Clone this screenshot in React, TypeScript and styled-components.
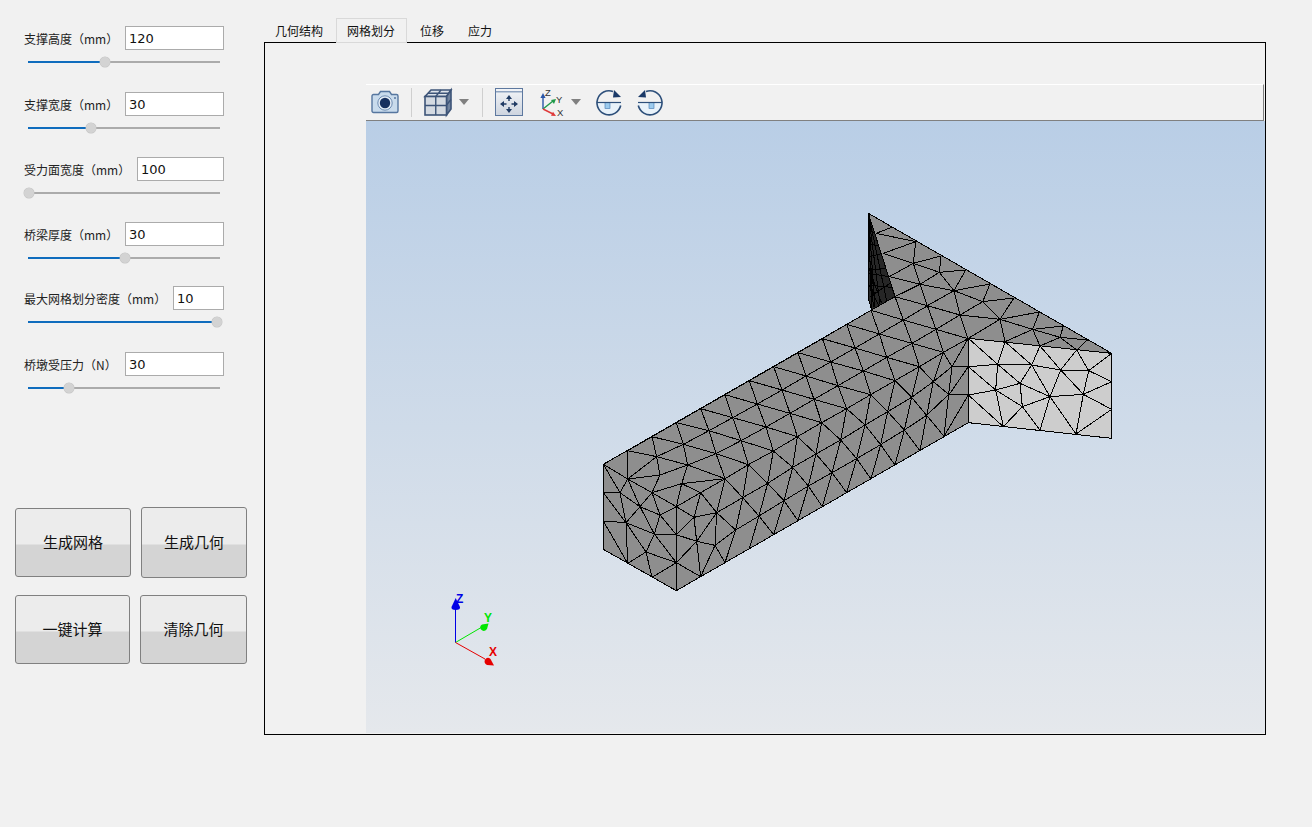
import React from "react";
import styled, { createGlobalStyle } from "styled-components";

const Global = createGlobalStyle`
  html, body { margin: 0; padding: 0; background: #f1f1f1; overflow: hidden; }
  body { width: 1312px; height: 827px; font-family: "Noto Sans CJK SC", "Liberation Sans", sans-serif; }
`;

const Page = styled.div`
  display: flex;
  width: 1312px;
  height: 827px;
  background: #f1f1f1;
`;

const SidePanel = styled.div`
  width: 263px;
  flex: none;
  padding-top: 26px;
  box-sizing: border-box;
`;

const ParamBlock = styled.div<{ $gap: number }>`
  width: 200px;
  margin: 0 0 ${(p) => p.$gap}px 24px;
`;

const ParamHead = styled.div`
  display: flex;
  align-items: center;
  height: 24px;
`;

const ParamLabel = styled.label`
  flex: 1;
  padding-top: 1px;
  font-size: 12px;
  line-height: 26px;
  color: #222;
  white-space: nowrap;
`;

const ParamInput = styled.input<{ $w: number }>`
  width: ${(p) => p.$w}px;
  height: 24px;
  box-sizing: border-box;
  border: 1px solid #ababab;
  background: #fff;
  padding: 0 3px;
  margin: 0;
  outline: none;
  font-family: "DejaVu Sans", sans-serif;
  font-size: 13px;
  color: #111;
`;

const SliderRow = styled.div`
  display: flex;
  align-items: center;
  width: 192px;
  height: 10px;
  margin: 7px 0 0 4px;
`;

const SliderFill = styled.div`
  height: 2px;
  background: #0f6cbd;
  flex: none;
`;

const SliderRest = styled.div`
  height: 2px;
  flex: 1;
  background: #ababab;
`;

const SliderThumb = styled.div`
  width: 10px;
  height: 10px;
  margin: 0 -5px;
  border-radius: 50%;
  background: #d3d3d3;
  box-shadow: 0 0 0 0.5px #c4c4c4;
  flex: none;
  position: relative;
  z-index: 1;
`;

const ButtonRow = styled.div<{ $h: number; $top: number }>`
  display: flex;
  align-items: center;
  height: ${(p) => p.$h}px;
  margin-top: ${(p) => p.$top}px;
  padding-left: 15px;
`;

const ActionButton = styled.button<{ $w: number; $h: number; $ml?: number }>`
  width: ${(p) => p.$w}px;
  height: ${(p) => p.$h}px;
  margin: 0 0 0 ${(p) => p.$ml ?? 0}px;
  padding: 0 0 2px;
  box-sizing: border-box;
  border: 1px solid #808080;
  border-radius: 3px;
  background: linear-gradient(#ececec 0, #ececec 51.6%, #e0e0e0 51.6%, #e0e0e0 53%, #d4d4d4 53%, #d4d4d4 100%);
  font-family: "Noto Sans CJK SC", sans-serif;
  font-size: 15px;
  color: #111;
`;

const Workspace = styled.div`
  flex: none;
  width: 1003px;
  padding-top: 18px;
`;

const TabBar = styled.div`
  display: flex;
  height: 25px;
  margin-bottom: -1px;
  position: relative;
  z-index: 1;
`;

const Tab = styled.div<{ $active?: boolean }>`
  box-sizing: border-box;
  height: 25px;
  font-size: 12px;
  line-height: 26px;
  color: #111;
  white-space: nowrap;
  ${(p) =>
    p.$active
      ? `margin: 0 1px 0 1px; padding: 0 11px 0 10px; border: 1px solid #d9d9d9; line-height: 24px; background: #f1f1f1;`
      : `padding: 0 12px;`}
`;

const Frame = styled.div`
  width: 1002px;
  height: 693px;
  margin-left: 1px;
  box-sizing: border-box;
  border: 1px solid #000;
  padding: 41px 0 0 101px;
`;

const Toolbar = styled.div`
  display: flex;
  align-items: center;
  box-sizing: border-box;
  width: 898px;
  height: 37px;
  padding-left: 5px;
  border-top: 1px solid #fff;
  border-bottom: 1px solid #808080;
  border-right: 1px solid #808080;
  background: #f1f1f1;
`;

const ToolIcon = styled.svg<{ $ml?: number; $up?: number }>`
  display: block;
  flex: none;
  overflow: visible;
  margin-left: ${(p) => p.$ml ?? 0}px;
  margin-bottom: ${(p) => p.$up ?? 0}px;
`;

const ToolSeparator = styled.div<{ $ml: number }>`
  width: 1px;
  height: 29px;
  flex: none;
  margin-left: ${(p) => p.$ml}px;
  background: #cfcfcf;
`;

const Viewport = styled.div`
  width: 899px;
  height: 612px;
  background: linear-gradient(#b9cee6, #e5e8ec);
`;

const MeshCanvas = styled.svg`
  display: block;
  width: 899px;
  height: 612px;
`;

type Line = number[];
const A: Line[] = [
  [113,452,186,410,259,368,332,326,405,284,478,242,551,200,624,158,697,116,770,73,843,31],
  [113,537,200,470,280,433,357,392,428,353,502,312,576,270,648,228,722,186,795,144,868,102,940,60,1013,17],
  [113,537,210,525,293,495,378,461,453,422,528,381,600,340,672,298,744,257,820,213,890,172,966,130,1038,88,1110,45],
  [186,578,275,551,405,536,475,494,550,453,622,410,695,368,770,326,842,284,915,242,988,200,1060,157,1134,116],
  [332,578,405,536],
  [380,638,458,593,533,550,608,502,678,462,752,420,825,375,893,335,965,292,1030,245,1086,200],
  [375,736,437,690,507,648,582,602,655,558,726,518,800,476,872,434,943,390,1010,346,1076,283],
  [332,326,357,392,378,461,405,536],
  [405,284,428,353,453,422,475,494,458,593,437,690,405,788],
  [478,242,502,312,528,381,550,453,533,550,507,648,478,746],
  [551,200,576,270,600,340,622,410,608,502,582,602,551,704],
  [624,158,648,228,672,298,695,368,678,462,655,558,624,662],
  [697,116,722,186,744,257,770,326,752,420,726,518,697,620],
  [770,73,795,144,820,213,842,284,825,375,800,476,770,578],
  [843,31,868,102,890,172,915,242,893,335,872,434,843,537],
  [915,-10,940,60,966,130,988,200,965,292,943,390,915,495],
  [1012,17,1038,88,1060,157,1030,245,1010,346,990,452],
  [1092,-28,1110,45,1134,116,1086,200,1076,283,1062,409],
  [113,452,200,470,293,495,405,536],
  [186,410,280,433,378,461,475,494],
  [259,368,357,392,453,422,550,453],
  [332,326,428,353,528,381,622,410],
  [405,284,502,312,600,340,695,368],
  [478,242,576,270,672,298,770,326],
  [551,200,648,228,744,257,842,284],
  [624,158,722,186,820,213,915,242],
  [697,116,795,144,890,172,988,200],
  [770,73,868,102,966,130,1060,157],
  [843,31,940,60,1038,88,1134,116],
  [405,536,458,593,507,648,551,704],
  [475,494,533,550,582,602,624,662],
  [550,453,608,502,655,558,697,620],
  [622,410,678,462,726,518,770,578],
  [695,368,752,420,800,476,843,537],
  [770,326,825,375,872,434,915,495],
  [842,284,893,335,943,390,990,452],
  [915,242,965,292,1010,346,1062,409],
  [988,200,1030,245,1076,283],
  [1060,157,1086,200],
  [1086,200,1135,200,1078,283,1135,285,1062,409],
  [40,493,113,537],
  [113,452,113,537],
  [186,410,200,470,210,525,186,578],
  [259,368,280,433,293,495,275,551,259,620],
  [113,537,186,578],
  [113,537,150,620],
  [40,493,90,578,108,668],
  [40,578,90,578,113,537],
  [40,578,108,668],
  [40,663,108,668,113,790],
  [40,663,113,790],
  [108,668,150,620,90,578],
  [150,620,186,578,210,645,150,620],
  [210,645,259,620,186,578],
  [275,551,332,578,259,620,312,652,332,578],
  [312,652,380,638,332,578],
  [380,638,405,536],
  [312,652,320,724,380,638,375,736,320,724,259,704,312,652],
  [108,668,193,702,150,620],
  [210,645,193,702,259,704,210,645],
  [193,702,168,756,108,668],
  [193,702,259,788,168,756,113,790],
  [168,756,186,832,259,788,320,724,332,830,259,788],
  [375,736,405,788],
  [375,736,332,830],
  [437,690,380,638],
  [259,620,259,872],
];

const C: Line[] = [
  [78,100,125,82],
  [78,100,197,125,100,160,190,190,197,125],
  [190,190,273,168,268,217,190,190,118,230,210,253,190,190],
  [268,217,347,210,312,272,268,217,210,253,312,272,420,252,398,305,492,294,450,358,568,336,548,388,640,378,630,412,712,420,680,450,630,412,548,388,450,358,398,305,312,272],
  [135,290,210,253,232,317,135,290],
  [232,317,312,272],
  [398,305,330,345],
  [232,317,330,345,450,358,355,415],
  [548,388,570,438,630,412],
  [548,388,465,425,450,358],
  [355,415,785,460],
];

const L: Line[] = [
  [355,415,443,493,465,425,545,495,570,438,632,510,680,450,716,512,785,460],
  [355,500,443,493,545,495,632,510,716,512,785,545],
  [716,512,700,583,632,510,600,590,545,495,510,550,600,590,570,690,517,620,600,590,678,702,700,583,600,590],
  [443,493,510,550,437,570,443,493],
  [355,500,437,570,355,585,460,680,437,570,517,620,460,680],
  [510,550,517,620],
  [700,583,785,545],
  [700,583,785,628,678,702],
];

const Fin: Line[] = [
  [55,40,65,330],[55,40,75,322],[55,40,90,312],[55,40,110,302],
  [55,90,78,100],[55,130,90,140],[55,170,100,160],[55,220,118,230],[55,255,125,262],
  [55,120,70,320],[55,200,95,310],[60,290,120,250],[58,210,112,205],[56,150,75,300],[55,250,85,315],
];

const zA = (x: number, y: number) => `${590 + x / 3},${300 + y / 3}`;
const zC = (x: number, y: number) => `${850 + x / 3},${200 + y / 3}`;
const pts = (l: Line, f: (x: number, y: number) => string) => {
  const out: string[] = [];
  for (let i = 0; i < l.length; i += 2) out.push(f(l[i], l[i + 1]));
  return out.join(" ");
};

function Mesh() {
  const bodyOutline = [
    zA(40, 493), zA(843, 31), zC(135, 290), zC(55, 40), zC(785, 460), zC(355, 415), zC(355, 668),
    zA(259, 872), zA(40, 748),
  ].join(" ");
  return (
    <MeshCanvas viewBox="366 121 899 612">
      <polygon points={pts([55,40,55,295,65,330,135,290], zC)} fill="#262626" stroke="#000" strokeWidth={1} shapeRendering="crispEdges" />
      <g stroke="#000" strokeWidth={1} fill="none" shapeRendering="crispEdges">
        {Fin.map((l, i) => <polyline key={i} points={pts(l, zC)} />)}
      </g>
      <polygon points={bodyOutline} fill="#8e8e8e" stroke="#000" strokeWidth={1} shapeRendering="crispEdges" />
      <polygon points={pts([355,415,785,460,785,715,355,668], zC)} fill="#cdcdcd" stroke="#000" strokeWidth={1} shapeRendering="crispEdges" />
      <g stroke="#000" strokeWidth={1} fill="none" shapeRendering="crispEdges" strokeLinejoin="round">
        {A.map((l, i) => <polyline key={i} points={pts(l, zA)} />)}
        {C.map((l, i) => <polyline key={i} points={pts(l, zC)} />)}
        {L.map((l, i) => <polyline key={i} points={pts(l, zC)} />)}
      </g>
      <line x1="455.5" y1="642.5" x2="455.5" y2="606" stroke="#0000e6" strokeWidth={1} />
      <path d="M455.700 598 L460 607 Q460.500 610 455.700 610 Q451 610 451.500 607 Z" fill="#0000e6" />
      <text x="456" y="603" fontFamily="Liberation Sans, sans-serif" fontWeight="700" fontSize="12" fill="#0000e6">Z</text>
      <line x1="455.5" y1="642.5" x2="482" y2="627" stroke="#00e600" strokeWidth={1} />
      <path d="M488.500 623.500 L487 629 Q484 632.500 481 629.500 Q479 626.500 482 624.500 Z" fill="#00e600" />
      <text x="484" y="622" fontFamily="Liberation Sans, sans-serif" fontWeight="700" fontSize="12" fill="#00e600">Y</text>
      <line x1="455.5" y1="642.5" x2="485" y2="659" stroke="#e60000" strokeWidth={1} />
      <path d="M494 665.500 L487 665 Q483.500 663 485 659.500 Q487.500 656.500 490.500 659 Z" fill="#e60000" />
      <text x="489" y="656" fontFamily="Liberation Sans, sans-serif" fontWeight="700" fontSize="12" fill="#e60000">X</text>
    </MeshCanvas>
  );
}

const CameraIcon = () => (
  <ToolIcon width={28} height={24} viewBox="0 0 28 24" $up={1}>
    <path d="M2.500 4.500h5l2-3h9l2 3h5a1.500 1.500 0 0 1 1.500 1.500v15a1.500 1.500 0 0 1-1.500 1.500h-23A1.500 1.500 0 0 1 1 21V6a1.500 1.500 0 0 1 1.500-1.500z" fill="#c9dbec" stroke="#56769f" strokeWidth={1.4} />
    <circle cx={14} cy={13} r={7.2} fill="#e3ecf5" stroke="#6f8db3" strokeWidth={1} />
    <circle cx={14} cy={13} r={5.2} fill="#17305f" />
    <circle cx={24} cy={8} r={1} fill="#56769f" />
  </ToolIcon>
);

const CubeIcon = () => (
  <ToolIcon $ml={12} width={28} height={27} viewBox="0 0 28 27" $up={1}>
    <path d="M1 7.500 7 1h20l-4.500 6.500z" fill="#dde3ea" stroke="#3d5478" strokeWidth={1.6} />
    <path d="M22.500 7.500 27 1v19l-4.500 6z" fill="#71849f" stroke="#3d5478" strokeWidth={1.6} />
    <rect x={1} y={7.5} width={21.5} height={18.5} fill="#d4dae2" stroke="#3d5478" strokeWidth={1.6} />
    <path d="M11.750 7.500V26M1 16.500h21.500M11.750 7.500 17 1M22.500 16 27 10.500M4 4.300h20" stroke="#3d5478" strokeWidth={1.4} fill="none" />
  </ToolIcon>
);

const DropArrow = ({ ml }: { ml: number }) => (
  <ToolIcon $ml={ml} width={10} height={6} viewBox="0 0 10 6" $up={1}>
    <polygon points="0,0 10,0 5,6" fill="#808080" />
  </ToolIcon>
);

const PanIcon = () => (
  <ToolIcon $ml={12} width={28} height={28} viewBox="0 0 28 28" $up={1}>
    <defs>
      <linearGradient id="panBg" x1="0" y1="0" x2="0" y2="1">
        <stop offset="0" stopColor="#f3f5f8" />
        <stop offset="1" stopColor="#cdd4df" />
      </linearGradient>
    </defs>
    <rect x={0.5} y={0.5} width={27} height={27} fill="url(#panBg)" stroke="#5d789f" />
    <rect x={1} y={3} width={26} height={1.5} fill="#8ea3c0" />
    <path d="M14 9v4M14 19v4M7.500 16h4M16.500 16h4" stroke="#1f3a63" strokeWidth={1.4} fill="none" />
    <path d="M14 7l3 4h-6zM14 25l3-4h-6zM5 16l4-3v6zM23 16l-4-3v6z" fill="#1f3a63" />
  </ToolIcon>
);

const AxesIcon = () => (
  <ToolIcon $ml={15} width={26} height={29} viewBox="0 0 26 29" $up={1}>
    <path d="M5 21V8" stroke="#2a56a8" strokeWidth={1.4} />
    <path d="M5 5l2.600 5H2.400z" fill="#2a56a8" />
    <path d="M5 21l10-8" stroke="#1f9a4a" strokeWidth={1.4} />
    <path d="M18 11l-2 5-3-4z" fill="#1f9a4a" />
    <path d="M5 21l10 5" stroke="#e03a3a" strokeWidth={1.4} />
    <path d="M18 28l-5-.200 2-4z" fill="#e03a3a" />
    <text x={7} y={8} fontFamily="Liberation Sans, sans-serif" fontSize="9.500" fill="#333">Z</text>
    <text x={18} y={15} fontFamily="Liberation Sans, sans-serif" fontSize="9.500" fill="#333">Y</text>
    <text x={19} y={28} fontFamily="Liberation Sans, sans-serif" fontSize="9.500" fill="#333">X</text>
  </ToolIcon>
);

const RotateArt = () => (
  <>
    <path d="M1 13.500a12 12 0 0 0 24 0z" fill="#e8f2fa" />
    <rect x={9} y={13.5} width={5} height={6} fill="#9ccbee" stroke="#3f76ad" strokeWidth={0.6} />
    <path d="M1 13.500h24" stroke="#2d4f7a" strokeWidth={1.2} fill="none" />
    <path d="M24.700 16.500a12 12 0 1 1-7.700-14" stroke="#2d4f7a" strokeWidth={1.6} fill="none" />
    <path d="M18 1 25 8 17 8.500z" fill="#1b3a68" />
  </>
);

const RotateRightIcon = () => (
  <ToolIcon $ml={15} width={26} height={26} viewBox="0 0 26 26" $up={1}><RotateArt /></ToolIcon>
);

const RotateLeftIcon = () => (
  <ToolIcon $ml={15} width={26} height={26} viewBox="0 0 26 26" $up={1}>
    <g transform="translate(26 0) scale(-1 1)"><RotateArt /></g>
  </ToolIcon>
);

const params = [
  { label: "支撑高度（mm）", value: "120", w: 99, fill: 77, gap: 25 },
  { label: "支撑宽度（mm）", value: "30", w: 99, fill: 63, gap: 24 },
  { label: "受力面宽度（mm）", value: "100", w: 87, fill: 1, gap: 24 },
  { label: "桥梁厚度（mm）", value: "30", w: 99, fill: 97, gap: 23 },
  { label: "最大网格划分密度（mm）", value: "10", w: 51, fill: 189, gap: 25 },
  { label: "桥墩受压力（N）", value: "30", w: 99, fill: 41, gap: 0 },
];

export default function App() {
  return (
    <Page>
      <Global />
      <SidePanel>
        {params.map((p) => (
          <ParamBlock key={p.label} $gap={p.gap}>
            <ParamHead>
              <ParamLabel>{p.label}</ParamLabel>
              <ParamInput $w={p.w} defaultValue={p.value} />
            </ParamHead>
            <SliderRow>
              <SliderFill style={{ width: p.fill }} />
              <SliderThumb />
              <SliderRest />
            </SliderRow>
          </ParamBlock>
        ))}
        <ButtonRow $h={71} $top={114}>
          <ActionButton $w={116} $h={69}>生成网格</ActionButton>
          <ActionButton $w={106} $h={71} $ml={10}>生成几何</ActionButton>
        </ButtonRow>
        <ButtonRow $h={69} $top={17}>
          <ActionButton $w={115} $h={69}>一键计算</ActionButton>
          <ActionButton $w={107} $h={69} $ml={10}>清除几何</ActionButton>
        </ButtonRow>
      </SidePanel>
      <Workspace>
        <TabBar>
          <Tab>几何结构</Tab>
          <Tab $active>网格划分</Tab>
          <Tab>位移</Tab>
          <Tab>应力</Tab>
        </TabBar>
        <Frame>
          <Toolbar>
            <CameraIcon />
            <ToolSeparator $ml={12} />
            <CubeIcon />
            <DropArrow ml={7} />
            <ToolSeparator $ml={13} />
            <PanIcon />
            <AxesIcon />
            <DropArrow ml={7} />
            <RotateRightIcon />
            <RotateLeftIcon />
          </Toolbar>
          <Viewport>
            <Mesh />
          </Viewport>
        </Frame>
      </Workspace>
    </Page>
  );
}
